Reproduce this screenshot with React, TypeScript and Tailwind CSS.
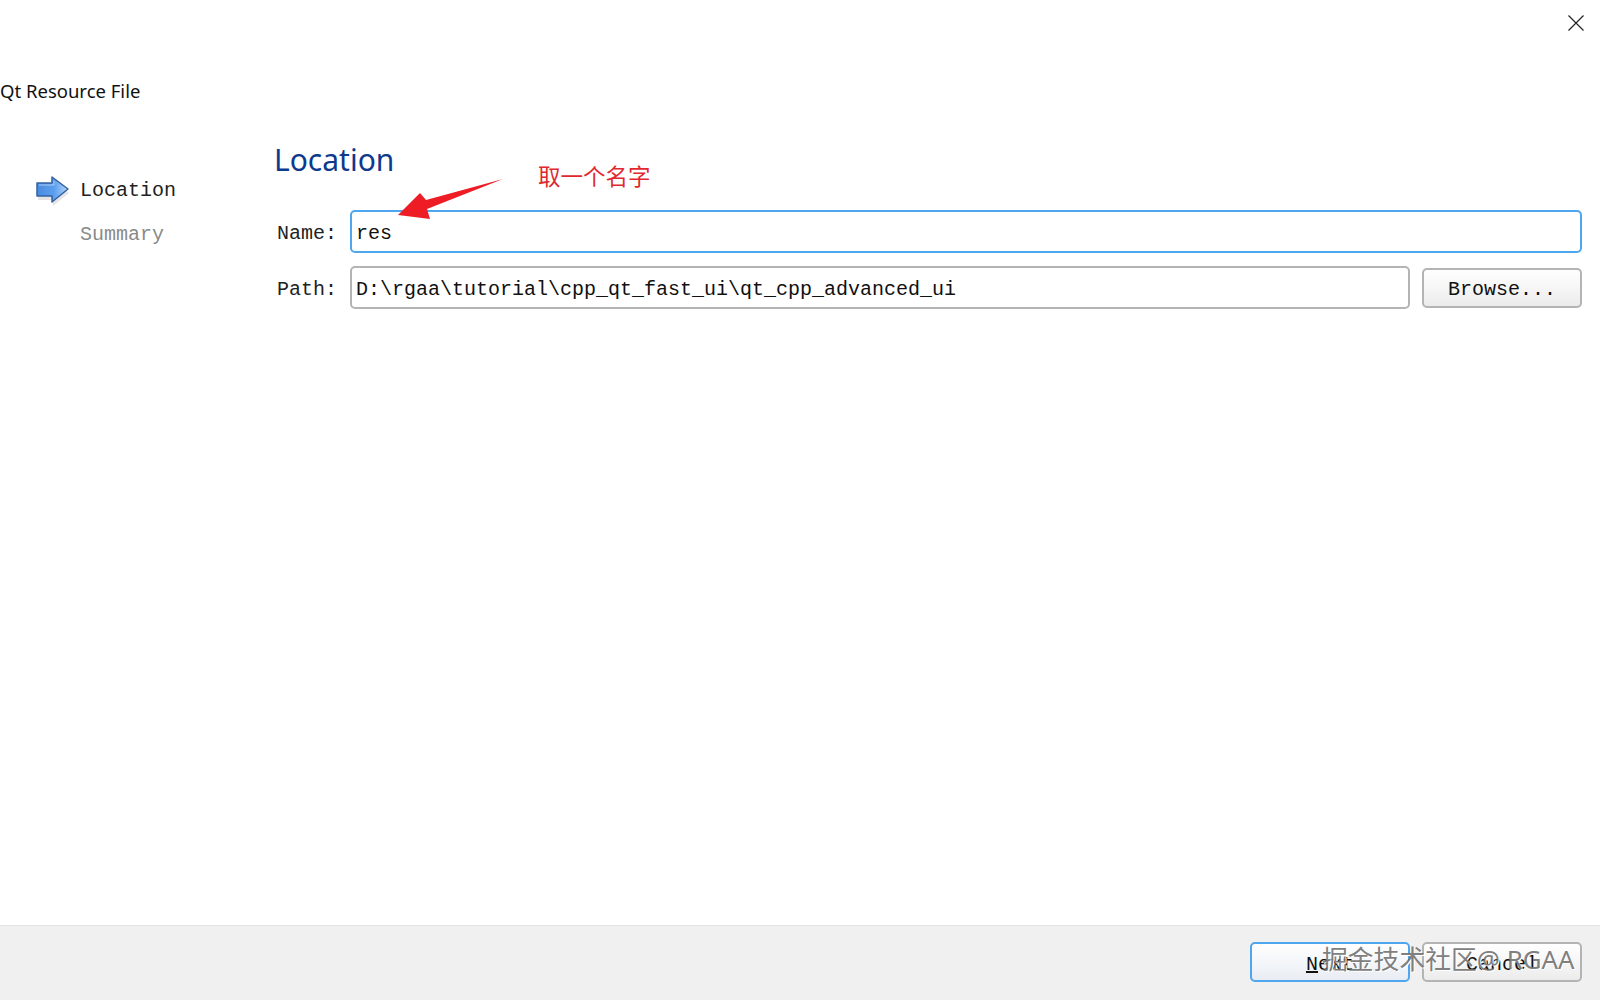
import React from 'react';

const mono = "font-['Liberation_Mono','Noto_Sans_CJK_SC',monospace]";
const sans = "font-['Noto_Sans','Noto_Sans_CJK_SC',sans-serif]";

const StepArrow = () => (
  <svg width="36" height="32" viewBox="0 0 36 32" className="shrink-0">
    <defs>
      <linearGradient id="arrowBody" x1="0" y1="0" x2="1" y2="0">
        <stop offset="0" stopColor="#4a8be0" />
        <stop offset="0.55" stopColor="#5c9fee" />
        <stop offset="1" stopColor="#b6d6f7" />
      </linearGradient>
    </defs>
    <path d="M2 10 H17 V4 L33 16 L17 29 V23 H2 Z" fill="#000" opacity="0.1" transform="translate(1 2)" />
    <path d="M2 8 H17 V2 L33 14 L17 27 V21 H2 Z" fill="url(#arrowBody)" stroke="#34619f" strokeWidth="1.5" strokeLinejoin="round" />
    <path d="M4 10 H19 V6" fill="none" stroke="#a8cdf5" strokeWidth="1" />
  </svg>
);

const FieldLabel = ({ children }: { children: React.ReactNode }) => (
  <span className={`w-[76px] pl-[3px] pt-[5px] text-[20px] leading-none text-[#222] ${mono}`}>{children}</span>
);

const DialogButton = ({ children, active }: { children: React.ReactNode; active?: boolean }) => (
  <button
    className={`flex h-[40px] w-[160px] items-center justify-center rounded-[5px] border-2 bg-gradient-to-b from-white pt-[5px] text-[20px] text-[#111] ${mono} ${
      active ? 'border-[#4ea6ee] to-[#e8edf3]' : 'border-[#b4b4b4] to-[#ececec]'
    }`}
  >
    {children}
  </button>
);

export default function App() {
  return (
    <div className="relative flex h-[1000px] w-[1600px] flex-col overflow-hidden bg-white">
      <header className="h-[134px] shrink-0">
        <div className="flex justify-end pr-[16px] pt-[15px]">
          <svg width="16" height="16" viewBox="0 0 16 16">
            <path d="M0.5 0.5 L15.5 15.5 M15.5 0.5 L0.5 15.5" stroke="#222" strokeWidth="1.2" fill="none" />
          </svg>
        </div>
        <h1 className={`mt-[46px] text-[18.5px] leading-[28px] text-[#111] ${sans}`}>Qt Resource File</h1>
      </header>

      <main className="flex min-h-0 flex-1">
        <nav className="w-[274px] shrink-0 pl-[35px] pt-[41px]">
          <div className="flex h-[32px] items-center gap-[9px]">
            <StepArrow />
            <span className={`text-[20px] leading-none text-[#222] ${mono}`}>Location</span>
          </div>
          <div className={`mt-[16px] pl-[45px] text-[20px] leading-[24px] text-[#8a8a8a] ${mono}`}>Summary</div>
        </nav>

        <section className="flex-1 pr-[18px]">
          <h2 className={`pt-[1px] text-[30px] leading-[50px] text-[#0d3a8c] ${sans}`}>Location</h2>
          <div className="mt-[25px] flex h-[43px] items-center">
            <FieldLabel>Name:</FieldLabel>
            <div className={`flex h-full flex-1 items-center rounded-[5px] border-2 border-[#4ea6ee] pl-[4px] pt-[5px] text-[20px] text-[#111] ${mono}`}>
              res
            </div>
          </div>
          <div className="mt-[13px] flex h-[43px] items-center">
            <FieldLabel>Path:</FieldLabel>
            <div className={`flex h-full flex-1 items-center rounded-[5px] border-2 border-[#b4b4b4] pl-[4px] pt-[5px] text-[20px] text-[#111] ${mono}`}>
              D:\rgaa\tutorial\cpp_qt_fast_ui\qt_cpp_advanced_ui
            </div>
            <div className="ml-[12px]">
              <DialogButton>Browse...</DialogButton>
            </div>
          </div>
        </section>
      </main>

      <footer className="flex h-[75px] shrink-0 items-start justify-end gap-[12px] border-t border-[#e2e2e2] bg-[#f0f0f0] pr-[18px] pt-[16px]">
        <DialogButton active>
          <span>
            <span className="underline">N</span>ext
          </span>
        </DialogButton>
        <DialogButton>Cancel</DialogButton>
      </footer>

      {/* annotation painted over the screenshot */}
      <svg width="120" height="50" viewBox="0 0 120 50" className="absolute left-[392px] top-[175px]">
        <polygon points="111,4 34,25 28,18 6,40 38,44 35,34" fill="#ee1c25" />
      </svg>
      <span className={`absolute left-[538px] top-[161px] text-[22.5px] leading-[32px] text-[#e0282e] ${sans}`}>取一个名字</span>

      {/* watermark */}
      <span className={`absolute left-[1322px] top-[941px] text-[25.8px] leading-[36px] text-[#6f6f6f]/90 [text-shadow:1px_1px_0_#fff] ${sans}`}>
        掘金技术社区@ RGAA
      </span>
    </div>
  );
}
